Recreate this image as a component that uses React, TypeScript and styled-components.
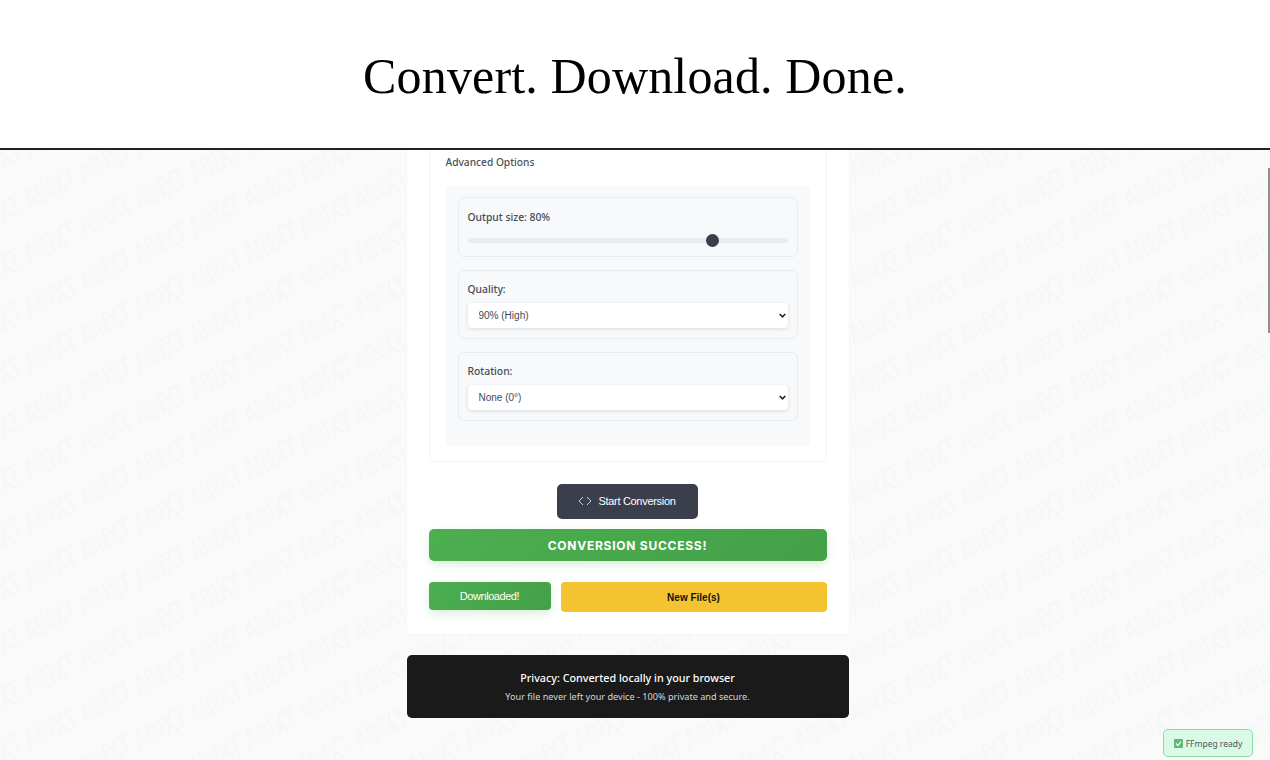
import React from "react";
import styled, { createGlobalStyle } from "styled-components";

const Global = createGlobalStyle`
  html, body { margin: 0; padding: 0; height: 100%; overflow: hidden; background: #fafafa; }
  #root { height: 760px; }
`;

const Page = styled.div`
  width: 1270px;
  height: 760px;
  display: flex;
  flex-direction: column;
  overflow: hidden;
  position: relative;
  font-family: "Noto Sans", sans-serif;
`;

const Header = styled.header`
  height: 145px;
  flex: none;
  padding-top: 3px;
  background: #fff;
  border-bottom: 2px solid #222;
  display: flex;
  align-items: center;
  justify-content: center;
`;

const Title = styled.h1`
  margin: 0;
  font-family: "Liberation Serif", serif;
  font-weight: 400;
  font-size: 50px;
  letter-spacing: 0.15px;
  color: #000;
`;

const Main = styled.main`
  flex: 1;
  position: relative;
  overflow: hidden;
  display: flex;
  flex-direction: column;
  align-items: center;
  padding-right: 15px;
  background: #fafafa;
`;

const Watermark = styled.svg`
  position: absolute;
  inset: 0;
  width: 100%;
  height: 100%;
`;

const MarkText = styled.text`
  font-family: "Liberation Sans", sans-serif;
  font-size: 29px;
  fill: none;
  stroke: #f0f1f3;
  stroke-width: 0.6;
`;

const Card = styled.section`
  position: relative;
  width: 442px;
  box-sizing: border-box;
  height: 484px;
  background: #fff;
  border-radius: 0 0 6px 6px;
  box-shadow: 0 0 0 1px #f5f6f7;
  padding: 0 22px;
  display: flex;
  flex-direction: column;
`;

const OptionsBox = styled.div`
  height: 312px;
  box-sizing: border-box;
  border: 1px solid #f2f3f5;
  border-top: 0;
  border-radius: 0 0 6px 6px;
  padding: 5px 16px 15px;
  display: flex;
  flex-direction: column;
`;

const OptionsTitle = styled.div`
  font-size: 10.2px;
  line-height: 14px;
  font-weight: 500;
  color: #4b5159;
  margin-bottom: 17px;
`;

const Panel = styled.div`
  flex: 1;
  background: #f8f9fa;
  border-radius: 5px;
  padding: 11px 12px;
  display: flex;
  flex-direction: column;
  gap: 13px;
`;

const Field = styled.div<{ $h: number; $top: number }>`
  height: ${(p) => p.$h}px;
  box-sizing: border-box;
  border: 1px solid #e9ecef;
  border-radius: 6px;
  padding: ${(p) => p.$top}px 9px 0;
`;

const Label = styled.label`
  display: block;
  font-size: 10.3px;
  line-height: 15px;
  font-weight: 500;
  color: #444b55;
`;

const Slider = styled.input`
  appearance: none;
  display: block;
  width: 320px;
  height: 5px;
  margin: 13px 0 0;
  background: #e9ecef;
  border-radius: 3px;
  outline: none;
  &::-webkit-slider-thumb {
    appearance: none;
    width: 13px;
    height: 13px;
    border-radius: 50%;
    background: #3a3f4b;
  }
`;

const SelectWrap = styled.div`
  position: relative;
  width: 320px;
  margin-top: 6px;
`;

const Select = styled.select`
  appearance: none;
  display: block;
  width: 100%;
  height: 25px;
  padding: 0 11px;
  border: 0;
  border-radius: 4px;
  background: #fff;
  box-shadow: 0 1px 4px rgba(0, 0, 0, 0.12);
  font-family: "Liberation Sans", sans-serif;
  font-size: 10px;
  color: #444b55;
  outline: none;
`;

const Chevron = styled.svg`
  position: absolute;
  right: 2px;
  top: 10px;
  width: 7px;
  height: 5px;
  fill: none;
  stroke: #222;
  stroke-width: 1.6;
  pointer-events: none;
`;

const StartRow = styled.div`
  display: flex;
  justify-content: center;
  margin-top: 22px;
  padding-right: 1px;
`;

const StartButton = styled.button`
  width: 141px;
  height: 35px;
  display: flex;
  align-items: center;
  justify-content: center;
  gap: 6px;
  padding: 0 0 2px;
  border: 0;
  border-radius: 5px;
  background: #3a3f4b;
  color: #fff;
  font-family: "Liberation Sans", sans-serif;
  font-size: 11px;
  letter-spacing: -0.3px;
`;

const CodeIcon = styled.svg`
  width: 14px;
  height: 10px;
  fill: none;
  stroke: #c9ccd2;
  stroke-width: 1;
`;

const SuccessBar = styled.div`
  height: 32px;
  margin-top: 10px;
  display: flex;
  align-items: center;
  justify-content: center;
  border-radius: 5px;
  background: linear-gradient(135deg, #4caf50, #43a047);
  box-shadow: 0 4px 10px rgba(76, 175, 80, 0.2);
  color: #fff;
  font-family: Inter, sans-serif;
  font-weight: 700;
  font-size: 12px;
  letter-spacing: 0.75px;
`;

const Actions = styled.div`
  display: flex;
  align-items: flex-start;
  gap: 10px;
  margin-top: 21px;
`;

const Downloaded = styled.button`
  width: 122px;
  height: 28px;
  border: 0;
  border-radius: 4px;
  background: linear-gradient(135deg, #4caf50, #43a047);
  box-shadow: 0 4px 10px rgba(76, 175, 80, 0.2);
  color: #fff;
  font-family: "Liberation Sans", sans-serif;
  font-size: 11px;
  letter-spacing: -0.45px;
`;

const NewFiles = styled.button`
  flex: 1;
  height: 30px;
  border: 0;
  border-radius: 4px;
  background: #f4c430;
  color: #111;
  font-family: "Liberation Sans", sans-serif;
  font-weight: 700;
  font-size: 10px;
`;

const Privacy = styled.aside`
  position: relative;
  width: 442px;
  height: 63px;
  box-sizing: border-box;
  margin-top: 21px;
  border-radius: 5px;
  background: #1a1a1a;
  color: #fff;
  display: flex;
  flex-direction: column;
  align-items: center;
  justify-content: center;
  gap: 4px;
`;

const PrivacyTitle = styled.div`
  font-size: 10.75px;
  line-height: 16px;
  font-weight: 500;
`;

const PrivacyText = styled.div`
  font-size: 9.15px;
  line-height: 13px;
  color: #d8d8d8;
`;

const Badge = styled.div`
  position: absolute;
  right: 17px;
  bottom: 3px;
  width: 90px;
  height: 28px;
  box-sizing: border-box;
  border: 1px solid #86e0a8;
  border-radius: 5px;
  background: #d9fbe6;
  color: #4b5563;
  font-size: 8.5px;
  display: flex;
  align-items: center;
  justify-content: center;
  gap: 3px;
`;

const Check = styled.svg`
  width: 9px;
  height: 9px;
`;

const Scrollbar = styled.div`
  position: absolute;
  right: 0;
  top: 168px;
  width: 2px;
  height: 165px;
  background: #8f8f8f;
`;

const marks: [number, number][] = [];
for (const [bx, by] of [
  [30, 6],
  [85, 33],
]) {
  for (const dx of [-110, 0, 110]) {
    for (const dy of [-54, 0, 54]) {
      marks.push([bx + dx, by + dy]);
    }
  }
}

export default function App() {
  return (
    <Page>
      <Global />
      <Header>
        <Title>Convert. Download. Done.</Title>
      </Header>
      <Main>
        <Watermark aria-hidden="true">
          <defs>
            <pattern id="wm" width="110" height="54" patternUnits="userSpaceOnUse">
              {marks.map(([x, y]) => (
                <MarkText
                  key={`${x}-${y}`}
                  textLength={56}
                  lengthAdjust="spacingAndGlyphs"
                  transform={`translate(${x} ${y}) rotate(-27)`}
                >
                  AINXT
                </MarkText>
              ))}
            </pattern>
          </defs>
          <rect width="100%" height="100%" fill="url(#wm)" />
        </Watermark>
        <Card>
          <OptionsBox>
            <OptionsTitle>Advanced Options</OptionsTitle>
            <Panel>
              <Field $h={60} $top={12}>
                <Label>Output size: 80%</Label>
                <Slider type="range" min={10} max={100} defaultValue={80} />
              </Field>
              <Field $h={69} $top={11}>
                <Label>Quality:</Label>
                <SelectWrap>
                  <Select defaultValue="90">
                    <option value="90">90% (High)</option>
                  </Select>
                  <Chevron viewBox="0 0 7 5">
                    <path d="M.7 1 3.5 3.8 6.3 1" />
                  </Chevron>
                </SelectWrap>
              </Field>
              <Field $h={69} $top={11}>
                <Label>Rotation:</Label>
                <SelectWrap>
                  <Select defaultValue="0">
                    <option value="0">None (0°)</option>
                  </Select>
                  <Chevron viewBox="0 0 7 5">
                    <path d="M.7 1 3.5 3.8 6.3 1" />
                  </Chevron>
                </SelectWrap>
              </Field>
            </Panel>
          </OptionsBox>
          <StartRow>
            <StartButton>
              <CodeIcon viewBox="0 0 14 10">
                <path d="M5 1 1 5l4 4M9 1l4 4-4 4" />
              </CodeIcon>
              Start Conversion
            </StartButton>
          </StartRow>
          <SuccessBar>CONVERSION SUCCESS!</SuccessBar>
          <Actions>
            <Downloaded>Downloaded!</Downloaded>
            <NewFiles>New File(s)</NewFiles>
          </Actions>
        </Card>
        <Privacy>
          <PrivacyTitle>Privacy: Converted locally in your browser</PrivacyTitle>
          <PrivacyText>Your file never left your device - 100% private and secure.</PrivacyText>
        </Privacy>
      </Main>
      <Scrollbar />
      <Badge>
        <Check viewBox="0 0 9 9">
          <rect width="9" height="9" rx="1" fill="#5fb878" />
          <path d="M2 4.5 4 6.5 7 2.5" fill="none" stroke="#fff" strokeWidth="1.2" />
        </Check>
        FFmpeg ready
      </Badge>
    </Page>
  );
}
